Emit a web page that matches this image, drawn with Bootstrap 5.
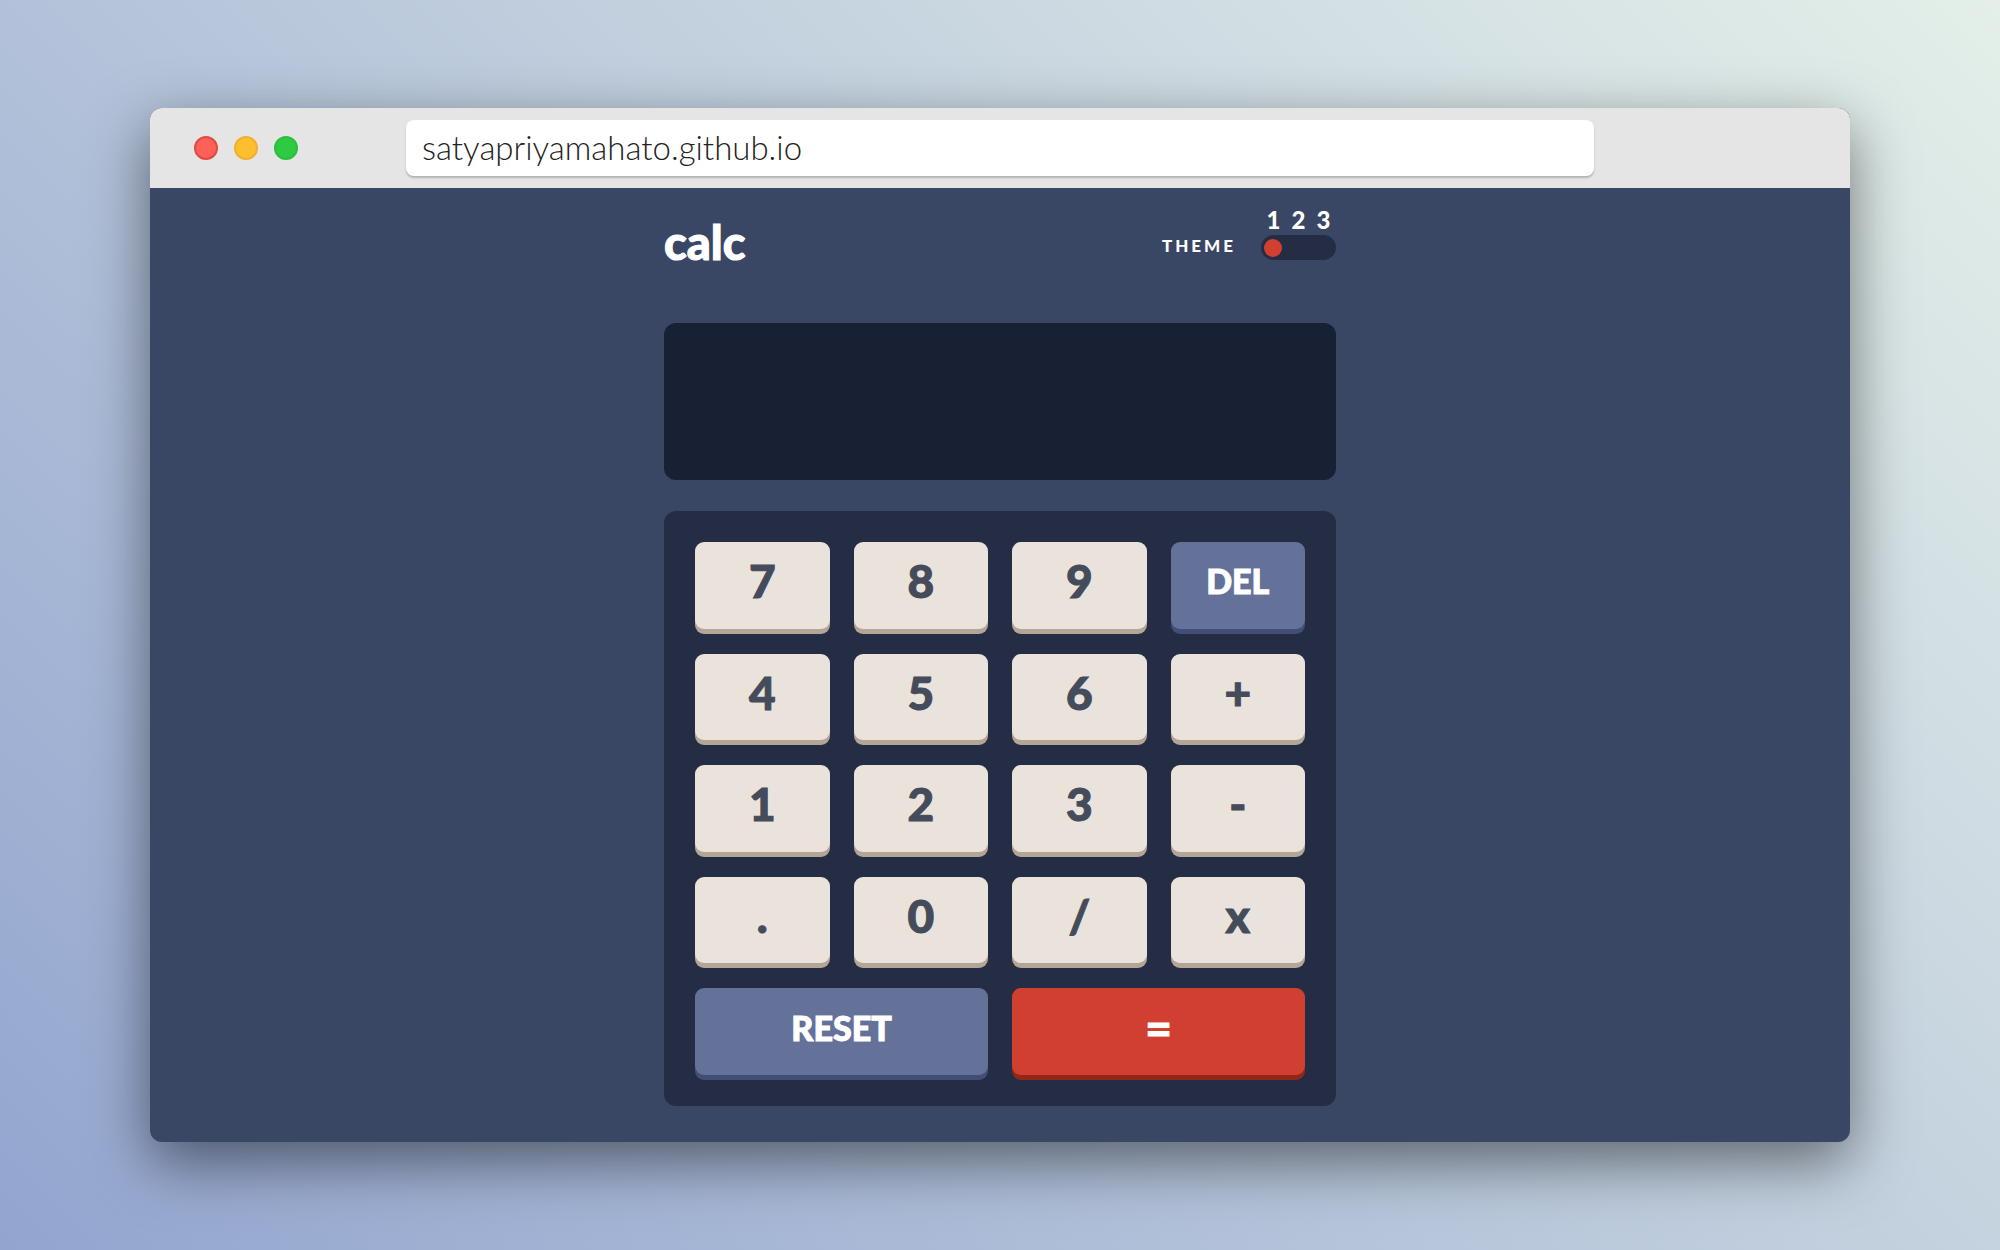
<!DOCTYPE html>
<html lang="en">
<head>
<meta charset="utf-8">
<meta name="viewport" content="width=device-width, initial-scale=1">
<title>calc</title>
<link href="https://cdn.jsdelivr.net/npm/bootstrap@5.3.0/dist/css/bootstrap.min.css" rel="stylesheet">
<style>
  body { font-family: Lato, sans-serif; background: linear-gradient(45deg, #93a5cf, #e4efe9); padding: 108px 7.5%; }
  .browser { border-radius: 12px; background: #3a4764; box-shadow: 0 20px 60px rgba(0,0,0,.5); }
  .browser-bar { background: #e5e5e5; height: 80px; border-radius: 12px 12px 0 0; }
  .bar-side { width: 256px; padding-left: 44px; gap: 16px; }
  .light { width: 24px; height: 24px; border-radius: 50%; border: 2px solid; }
  .light-close { background: #ff6058; border-color: #e04b41; }
  .light-min { background: #fdbe2f; border-color: #efb02c; }
  .light-max { background: #2ecb42; border-color: #29bf3c; }
  .address { height: 56px; border: 0; border-radius: 8px; padding: 0 16px 2px; font-size: 33px; font-weight: 300; color: #222; box-shadow: 0 2px 2px rgba(0,0,0,.22); }
  .calc { width: 100%; max-width: 672px; color: #fff; padding: 17px 0 36px; }
  .calc-head { margin-bottom: 63px; }
  .brand { font-size: 47px; line-height: 36px; font-weight: 900; margin: 0; -webkit-text-stroke: 1px; }
  .theme-label { font-size: 17px; line-height: 28px; font-weight: 900; letter-spacing: 3px; margin-right: 25px; }
  .theme-nums label { width: 25px; text-align: center; font-size: 24px; line-height: 30px; font-weight: 900; }
  .switch { width: 75px; height: 25px; padding: 3px; border-radius: 13px; background: #242d44; }
  .switch input { appearance: none; width: 18px; height: 18px; margin: 0; border-radius: 50%; }
  .switch input:checked { background: #d13f30; }
  .display { display: block; height: 157px; border-radius: 12px; background: #182034; margin-bottom: 31px; }
  .keypad { display: grid; grid-template-columns: repeat(4, 1fr); grid-auto-rows: 1fr; gap: 20px 24px; min-height: 595px; padding: 31px 31px 26px; border-radius: 12px; background: #242d44; }
  .key { border: 0; padding: 0 0 8px; margin-bottom: 5px; border-radius: 9px; background: #eae3dc; color: #444b5a; font-size: 46px; line-height: 60px; font-weight: 900; -webkit-text-stroke: 1px; box-shadow: 0 5px #b4a597; }
  .key-word { background: #647198; color: #fff; font-size: 34px; box-shadow: 0 5px #414e78; }
  .key-eq { background: #d13f30; color: #fff; box-shadow: 0 5px #93261a; }
  .key-wide { grid-column: span 2; }
</style>
<script src="https://cdn.jsdelivr.net/npm/bootstrap@5.3.0/dist/js/bootstrap.bundle.min.js"></script>
</head>
<body class="min-vh-100 d-flex flex-column">
<div class="browser flex-grow-1 d-flex flex-column">
  <header class="browser-bar d-flex align-items-center">
    <div class="bar-side d-flex">
      <span class="light light-close"></span><span class="light light-min"></span><span class="light light-max"></span>
    </div>
    <input class="address flex-grow-1" type="text" aria-label="Address" value="satyapriyamahato.github.io">
    <div class="bar-side"></div>
  </header>
  <main class="calc mx-auto">
    <div class="calc-head d-flex justify-content-between align-items-end">
      <h1 class="brand">calc</h1>
      <div class="d-flex align-items-end" role="radiogroup" aria-labelledby="theme">
        <span class="theme-label" id="theme">THEME</span>
        <div>
          <div class="theme-nums d-flex"><label for="t1">1</label><label for="t2">2</label><label for="t3">3</label></div>
          <div class="switch d-flex justify-content-between align-items-center">
            <input type="radio" name="theme" id="t1" checked><input type="radio" name="theme" id="t2"><input type="radio" name="theme" id="t3">
          </div>
        </div>
      </div>
    </div>
    <output class="display" aria-label="Result"></output>
    <div class="keypad">
      <button class="key" type="button">7</button>
      <button class="key" type="button">8</button>
      <button class="key" type="button">9</button>
      <button class="key key-word" type="button">DEL</button>
      <button class="key" type="button">4</button>
      <button class="key" type="button">5</button>
      <button class="key" type="button">6</button>
      <button class="key" type="button">+</button>
      <button class="key" type="button">1</button>
      <button class="key" type="button">2</button>
      <button class="key" type="button">3</button>
      <button class="key" type="button">-</button>
      <button class="key" type="button">.</button>
      <button class="key" type="button">0</button>
      <button class="key" type="button">/</button>
      <button class="key" type="button">x</button>
      <button class="key key-word key-wide" type="button">RESET</button>
      <button class="key key-eq key-wide" type="button">=</button>
    </div>
  </main>
</div>
</body>
</html>
